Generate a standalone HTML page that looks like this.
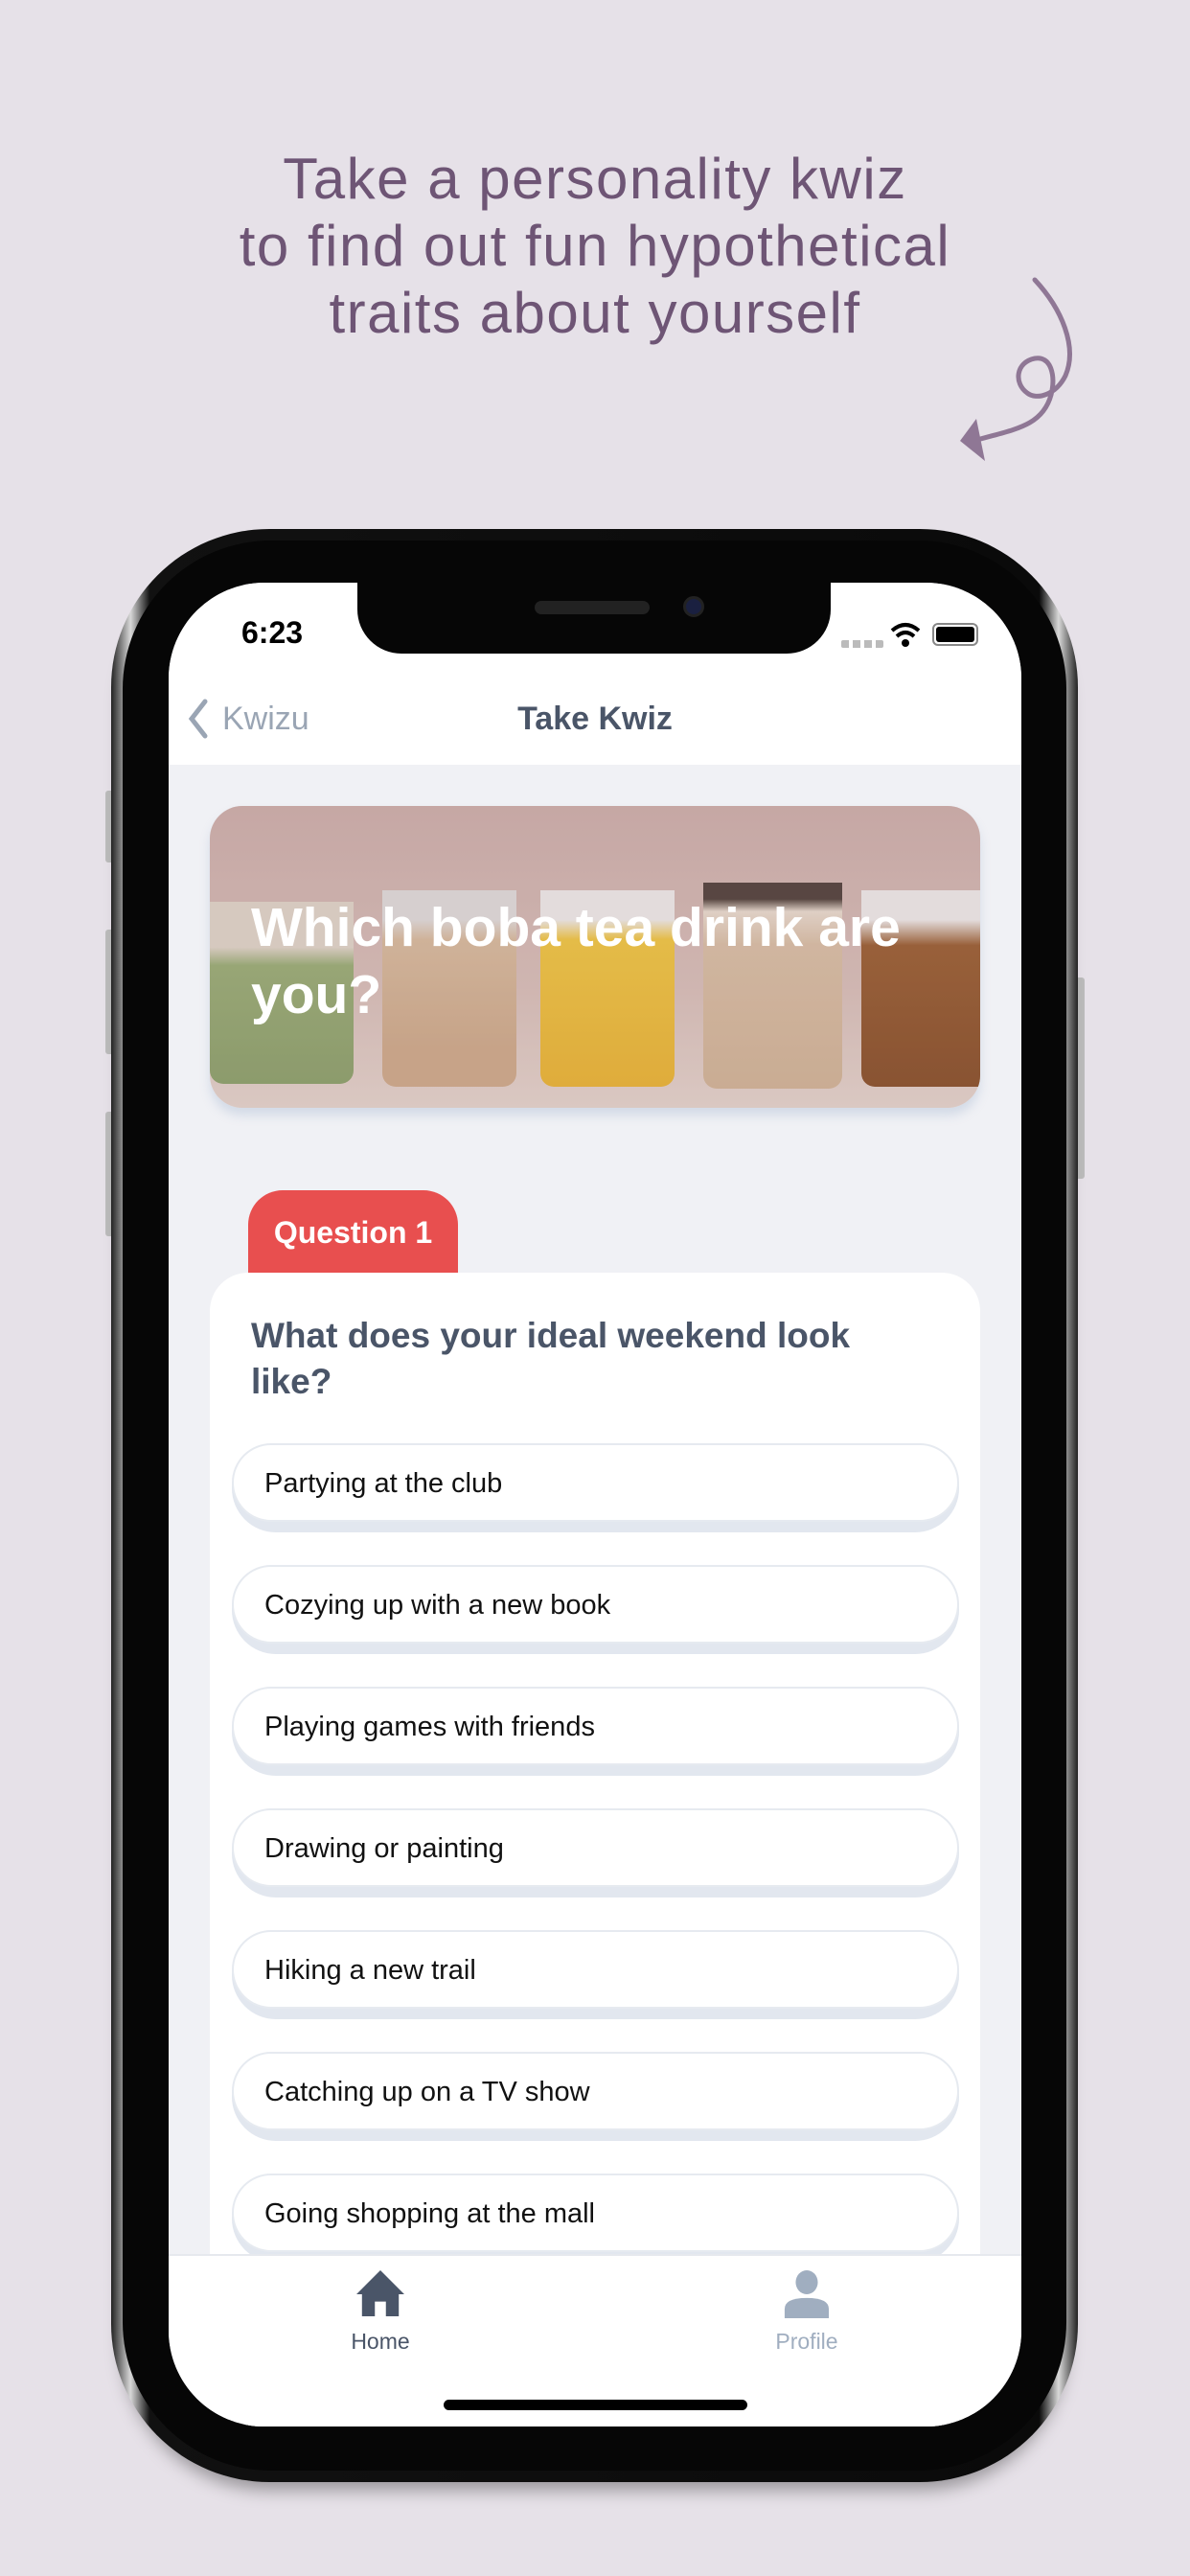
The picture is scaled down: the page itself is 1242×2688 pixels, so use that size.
<!DOCTYPE html>
<html><head><meta charset="utf-8">
<style>
*{margin:0;padding:0;box-sizing:border-box}
html,body{width:1242px;height:2688px;overflow:hidden;background:#e6e1e8;font-family:"Liberation Sans",sans-serif}
.head{position:absolute;left:0;width:1242px;text-align:center;color:#6e5575;font-size:60px;line-height:70px;top:152px;letter-spacing:1.5px}
.phone{position:absolute;left:116px;top:552px;width:1009px;height:2038px;border-radius:165px;background:linear-gradient(90deg,#222,#d8d8d8 2%,#111 4%,#0a0a0a 96%,#d8d8d8 98%,#222);box-shadow:0 20px 18px -12px rgba(0,0,0,.35)}
.phone .inner{position:absolute;left:12px;top:12px;right:12px;bottom:12px;border-radius:155px;background:#060606}
.screen{position:absolute;left:176px;top:608px;width:890px;height:1924px;border-radius:100px;background:#f0f1f5;overflow:hidden}
.notch{position:absolute;left:197px;top:0;width:494px;height:74px;background:#060606;border-radius:0 0 46px 46px}
.status{position:absolute;left:0;top:0;width:890px;height:190px;background:#fff}
.nav{position:absolute;left:0;top:100px;width:890px;height:90px;background:#fff}
.btn{position:absolute;width:14px;background:#bbb;border-radius:3px}
</style></head><body>
<div class="head">Take a personality kwiz<br>to find out fun hypothetical<br>traits about yourself</div>
<svg style="position:absolute;left:0;top:0" width="1242" height="600">
<path d="M1080,292 C1108,322 1125,362 1112,392 C1102,412 1082,418 1072,410 C1058,400 1060,378 1080,374 C1097,371 1102,392 1097,412 C1088,445 1058,448 1020,459" fill="none" stroke="#8f7795" stroke-width="5" stroke-linecap="round"/>
<polygon points="1002,460 1019,437 1028,481" fill="#8f7795"/>
</svg>
<div class="btn" style="left:110px;top:825px;height:75px"></div>
<div class="btn" style="left:110px;top:970px;height:130px"></div>
<div class="btn" style="left:110px;top:1160px;height:130px"></div>
<div class="btn" style="left:1118px;top:1020px;height:210px"></div>
<div class="phone"><div class="inner"></div></div>
<div class="screen">
 <div class="status"></div>
 <div class="notch"><div style="position:absolute;left:185px;top:19px;width:120px;height:14px;border-radius:7px;background:#222"></div><div style="position:absolute;left:340px;top:14px;width:22px;height:22px;border-radius:50%;background:#1a2040;border:3px solid #222"></div></div>
 <div style="position:absolute;left:76px;top:34px;font-size:32px;font-weight:bold;color:#000">6:23</div>
 <div style="position:absolute;left:702px;top:60px;width:44px;height:8px;background:repeating-linear-gradient(90deg,#bbb 0 8px,transparent 8px 12px);border-radius:2px"></div>
 <svg style="position:absolute;left:752px;top:40px" width="34" height="28" viewBox="0 0 34 28"><path d="M3,10 Q17,-2 31,10" stroke="#000" stroke-width="4" fill="none"/><path d="M8,16 Q17,8 26,16" stroke="#000" stroke-width="4" fill="none"/><circle cx="17" cy="23" r="4"/></svg>
 <div style="position:absolute;left:797px;top:42px;width:48px;height:24px;border:2px solid #888;border-radius:6px;padding:2px"><div style="width:100%;height:100%;background:#000;border-radius:3px"></div></div>
 <div class="nav">
  <svg style="position:absolute;left:18px;top:20px" width="26" height="44"><path d="M20,4 L6,22 L20,40" stroke="#9aa5b4" stroke-width="5" fill="none" stroke-linecap="round"/></svg>
  <div style="position:absolute;left:56px;top:23px;font-size:34px;color:#9aa5b4">Kwizu</div>
  <div style="position:absolute;left:0;width:890px;text-align:center;top:23px;font-size:34px;color:#4a5568;font-weight:bold">Take Kwiz</div>
 </div>
 <div style="position:absolute;left:43px;top:233px;width:804px;height:315px;border-radius:34px;overflow:hidden;background:linear-gradient(180deg,#c8aaa6 0%,#d4bcb6 60%,#e2d4cc 100%);box-shadow:0 8px 10px rgba(200,210,225,.7)">
  <div style="position:absolute;left:0;top:100px;width:150px;height:190px;background:linear-gradient(#ddd5c8 0 25%,#8da86a 35%,#7e9a5e);border-radius:0 0 14px 14px"></div>
  <div style="position:absolute;left:180px;top:88px;width:140px;height:205px;background:linear-gradient(#ddd 0 15%,#d4b898 25%,#c9a582 80%);border-radius:0 0 14px 14px"></div>
  <div style="position:absolute;left:345px;top:88px;width:140px;height:205px;background:linear-gradient(#eee 0 15%,#efc430 25%,#e8b020);border-radius:0 0 14px 14px"></div>
  <div style="position:absolute;left:515px;top:80px;width:145px;height:215px;background:linear-gradient(#3b2e28 0 8%,#e8ddd0 14%,#d5bca0 30%,#cdb090);border-radius:0 0 14px 14px"></div>
  <div style="position:absolute;left:680px;top:88px;width:140px;height:205px;background:linear-gradient(#eee 0 15%,#8e4f1e 28%,#7a3e14);border-radius:0 0 14px 14px"></div>
  <div style="position:absolute;left:0;top:0;width:100%;height:100%;background:rgba(190,160,160,.22)"></div>
  <div style="position:absolute;left:43px;top:92px;width:740px;font-size:57px;line-height:70px;font-weight:bold;color:#fff">Which boba tea drink are you?</div>
 </div>
 <div style="position:absolute;left:83px;top:634px;width:219px;height:90px;border-radius:36px 36px 0 0;background:#e84f4f;color:#fff;font-weight:bold;font-size:32px;text-align:center;padding-top:26px">Question 1</div>
 <div style="position:absolute;left:43px;top:720px;width:804px;height:1300px;border-radius:40px;background:#fff"></div>
 <div style="position:absolute;left:86px;top:762px;width:700px;font-size:37px;line-height:48px;font-weight:bold;color:#4a5568">What does your ideal weekend look like?</div>
 <div id="opts"></div>
 <div style="position:absolute;left:0;top:1744px;width:890px;height:180px;background:#fff;border-top:2px solid #e6e9ee">
  <svg style="position:absolute;left:196px;top:15px" width="50" height="48" viewBox="0 0 52 50"><polygon points="26,0 52,26 46,26 46,50 32,50 32,34 20,34 20,50 6,50 6,26 0,26" fill="#4a5568"/></svg>
  <div style="position:absolute;left:161px;top:76px;width:120px;text-align:center;font-size:23px;color:#4a5568">Home</div>
  <svg style="position:absolute;left:641px;top:15px" width="50" height="50" viewBox="0 0 52 52"><ellipse cx="26" cy="13" rx="12" ry="13" fill="#a0aec0"/><path d="M2,52 V42 Q2,30 26,30 Q50,30 50,42 V52Z" fill="#a0aec0"/></svg>
  <div style="position:absolute;left:606px;top:76px;width:120px;text-align:center;font-size:23px;color:#a0aec0">Profile</div>
  <div style="position:absolute;left:287px;top:150px;width:317px;height:11px;border-radius:6px;background:#000"></div>
 </div>
</div>
<script>
var t=["Partying at the club","Cozying up with a new book","Playing games with friends","Drawing or painting","Hiking a new trail","Catching up on a TV show","Going shopping at the mall"],h="";
for(var i=0;i<t.length;i++){h+='<div style="position:absolute;left:66px;top:'+(898+i*127)+'px;width:759px;height:93px;border-radius:46px;background:#e2e7ef"></div><div style="position:absolute;left:66px;top:'+(898+i*127)+'px;width:759px;height:82px;border-radius:42px;background:#fff;border:2px solid #e6eaf0;font-size:29px;color:#111;padding:24px 0 0 32px">'+t[i]+'</div>';}
document.getElementById("opts").outerHTML=h;
</script>
</body></html>
